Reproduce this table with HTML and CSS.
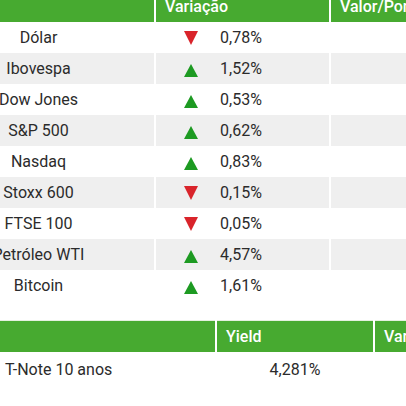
FILE: index.html
```html
<!DOCTYPE html>
<html lang="pt-BR">
<head>
    <meta charset="UTF-8">
    <meta name="viewport" content="width=device-width, initial-scale=1.0">
    <title>Mercados</title>
    <link rel="stylesheet" href="styles.css">
</head>
<body>

<div class="markets">
    <table class="quotes">
        <thead>
            <tr>
                <th class="col-name"></th>
                <th class="col-var">Variação</th>
                <th class="col-value">Valor/Pontos</th>
            </tr>
        </thead>
        <tbody>
            <tr><td class="name">Dólar</td><td class="var"><span class="arrow down"></span>0,78%</td><td></td></tr>
            <tr><td class="name">Ibovespa</td><td class="var"><span class="arrow up"></span>1,52%</td><td></td></tr>
            <tr><td class="name">Dow Jones</td><td class="var"><span class="arrow up"></span>0,53%</td><td></td></tr>
            <tr><td class="name">S&amp;P 500</td><td class="var"><span class="arrow up"></span>0,62%</td><td></td></tr>
            <tr><td class="name">Nasdaq</td><td class="var"><span class="arrow up"></span>0,83%</td><td></td></tr>
            <tr><td class="name">Stoxx 600</td><td class="var"><span class="arrow down"></span>0,15%</td><td></td></tr>
            <tr><td class="name">FTSE 100</td><td class="var"><span class="arrow down"></span>0,05%</td><td></td></tr>
            <tr><td class="name">Petróleo WTI</td><td class="var"><span class="arrow up"></span>4,57%</td><td></td></tr>
            <tr><td class="name">Bitcoin</td><td class="var"><span class="arrow up"></span>1,61%</td><td></td></tr>
        </tbody>
    </table>
</div>

<table class="bonds">
    <thead>
        <tr>
            <th class="col-bond"></th>
            <th class="col-yield">Yield</th>
            <th class="col-bvar">Variação</th>
        </tr>
    </thead>
    <tbody>
        <tr><td class="bond">T-Note 10 anos</td><td class="yield">4,281%</td><td></td></tr>
    </tbody>
</table>

</body>
</html>
```

FILE: styles.css
```css
body {
    margin: 0;
    font-family: Roboto, 'Liberation Sans', sans-serif;
    font-size: 16px;
    color: #2b2b2b;
    background: #fff;
    overflow: hidden;
    width: 406px;
    height: 406px;
}

table {
    border-collapse: collapse;
    table-layout: fixed;
}

th {
    background: #47aa30;
    color: #fff;
    font-weight: 500;
    text-align: left;
    height: 31px;
    padding: 0 0 0 9px;
    border-left: 2px solid #fff;
    box-sizing: border-box;
}

th:first-child {
    border-left: none;
}

td {
    height: 31px;
    padding: 0;
    border-left: 2px solid #fff;
    box-sizing: border-box;
}

td:first-child {
    border-left: none;
}

/* cotações */
.markets {
    margin: -9px 0 0 -77px;
}

.quotes {
    width: 600px;
}

.quotes thead tr {
    border-bottom: 1px solid #fff;
}

.quotes tbody tr:nth-child(even) td {
    background: #efefef;
}

.col-name { width: 232px; }
.col-var { width: 175px; }
.col-value { width: 193px; }

.name {
    text-align: center;
}

.var {
    padding-left: 28px;
}

.arrow {
    display: inline-block;
    width: 0;
    height: 0;
    margin-right: 22px;
    border-left: 7px solid transparent;
    border-right: 7px solid transparent;
}

.arrow.down {
    border-top: 14px solid #d9242b;
    vertical-align: -2px;
}

.arrow.up {
    border-bottom: 13px solid #1d9a22;
    vertical-align: -3px;
}

/* títulos */
.bonds {
    margin-top: 19px;
    width: 560px;
}

.bonds thead tr {
    border-top: 1px solid #e4f1de;
}

.col-bond { width: 216px; }
.col-yield { width: 158px; }
.col-bvar { width: 186px; }

.bonds td {
    height: 35px;
}

.bond {
    padding-left: 5px;
}

.yield {
    text-align: center;
}
```
